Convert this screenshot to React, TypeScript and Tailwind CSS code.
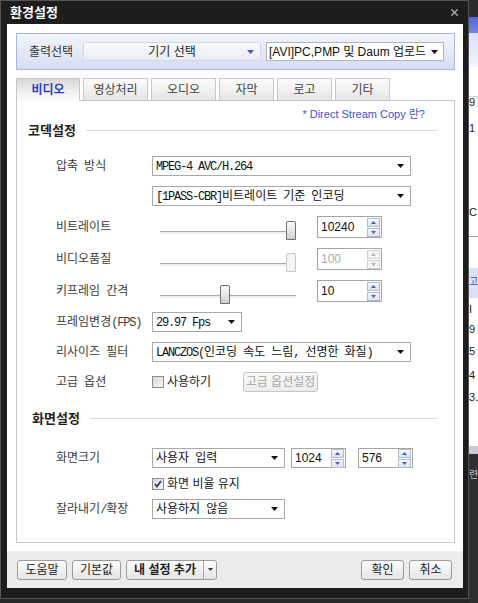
import { X } from 'lucide-react'

const KO = /([\u1100-\u11ff\u3130-\u318f\uac00-\ud7af]+)/

// GulimChe-like text: Korean full width, Latin half width
function Che({ text }: { text: string }) {
  return (
    <span className="whitespace-pre">
      {text.split(KO).map((p, i) =>
        i % 2 ? (
          <span key={i} className="font-['Noto_Sans_CJK_KR',sans-serif] text-[12px]">
            {p}
          </span>
        ) : (
          <span key={i} className="font-['Liberation_Mono',monospace] text-[12px] tracking-[-1.2px]">
            {p}
          </span>
        ),
      )}
    </span>
  )
}

function Arrow({ color = '#111' }: { color?: string }) {
  return (
    <svg width="7" height="4" viewBox="0 0 7 4">
      <path d="M0 0h7L3.5 4z" fill={color} />
    </svg>
  )
}

function Label({ text }: { text: string }) {
  return (
    <div className="w-[96px] shrink-0 text-[#3c3c3c]">
      <Che text={text} />
    </div>
  )
}

function Select({ text, className }: { text: string; className: string }) {
  return (
    <div
      className={`flex h-[20px] shrink-0 items-center justify-between border border-[#a9a9a9] bg-white pl-[3px] pr-[6px] text-[#111] ${className}`}
    >
      <Che text={text} />
      <Arrow />
    </div>
  )
}

function SpinBtn({ up, disabled }: { up?: boolean; disabled?: boolean }) {
  return (
    <div
      className={`flex h-[9px] w-[13px] items-center justify-center border ${
        disabled
          ? 'border-[#d0d0d0] bg-[#f3f3f3]'
          : 'border-[#b3bccd] bg-linear-to-b from-[#f6f8fc] to-[#dde3ef]'
      }`}
    >
      <svg width="5" height="3" viewBox="0 0 5 3">
        <path d={up ? 'M0 3h5L2.5 0z' : 'M0 0h5L2.5 3z'} fill={disabled ? '#b5b5b5' : '#3f5fcf'} />
      </svg>
    </div>
  )
}

function Spin({
  value,
  className,
  disabled,
}: {
  value: string
  className: string
  disabled?: boolean
}) {
  return (
    <div
      className={`flex shrink-0 items-center justify-between border border-[#a5a5a5] bg-white pl-[3px] pr-[1px] ${className}`}
    >
      <span className={`text-[12px] ${disabled ? 'text-[#ababab]' : 'text-[#111]'}`}>{value}</span>
      <div className="flex flex-col gap-[1px]">
        <SpinBtn up disabled={disabled} />
        <SpinBtn disabled={disabled} />
      </div>
    </div>
  )
}

function Slider({ pos, disabled }: { pos: number; disabled?: boolean }) {
  return (
    <div className="relative ml-[8px] h-full w-[136px] shrink-0">
      <div className="mt-[15px] h-[3px] border-t border-[#a9a9a9] bg-[#ededed]" />
      <div
        className={`absolute top-[5px] h-[19px] w-[10px] rounded-t-[2px] border ${
          disabled
            ? 'border-[#c8c8c8] bg-[#f4f4f4]'
            : 'border-[#707070] bg-linear-to-b from-[#fcfcfc] via-[#e8e8e8] to-[#cdcdcd]'
        }`}
        style={{ left: pos }}
      />
    </div>
  )
}

function Check({ checked }: { checked?: boolean }) {
  return (
    <span className="flex h-[12px] w-[12px] shrink-0 items-center justify-center border border-[#8d8d8d] bg-linear-to-br from-[#d8d8d8] to-[#fafafa]">
      {checked && (
        <svg width="8" height="8" viewBox="0 0 8 8">
          <path d="M1 4l2 2.5L7 1" fill="none" stroke="#2f3d66" strokeWidth="1.8" />
        </svg>
      )}
    </span>
  )
}

function Btn({ children, className, bold }: { children: React.ReactNode; className: string; bold?: boolean }) {
  return (
    <div
      className={`flex h-[20px] items-center justify-center rounded-[3px] border border-[#9c9c9c] bg-linear-to-b from-[#fdfdfd] to-[#e4e4e4] text-[12px] text-[#222] ${
        bold ? 'font-bold' : ''
      } ${className}`}
    >
      {children}
    </div>
  )
}

const TABS = [
  { name: '비디오', w: 'w-[64px]' },
  { name: '영상처리', w: 'w-[65px]' },
  { name: '오디오', w: 'w-[65px]' },
  { name: '자막', w: 'w-[55px]' },
  { name: '로고', w: 'w-[55px]' },
  { name: '기타', w: 'w-[55px]' },
]

function Heading({ text, className }: { text: string; className: string }) {
  return (
    <div className={`flex h-[14px] items-center pr-[17px] ${className}`}>
      <span className="text-[13px] font-bold text-[#222]">{text}</span>
      <div className="ml-[10px] h-px flex-1 bg-[#dadada]" />
    </div>
  )
}

function BackWindow() {
  return (
    <div className="flex w-[9px] flex-col overflow-hidden bg-white text-[11px] leading-none text-[#222]">
      <div className="h-[17px] shrink-0 bg-[#2b2b2b]" />
      <div className="h-[16px] shrink-0 bg-linear-to-b from-[#5468d6] to-[#7384e0]" />
      <div className="h-[34px] shrink-0 bg-linear-to-b from-[#dae1f7] to-[#f2f4fc]" />
      <div className="h-[30px] shrink-0 border-b border-[#d4d4d4]" />
      <div className="h-[16px] shrink-0">9</div>
      <div className="h-[90px] shrink-0 pt-[10px]">1</div>
      <div className="h-[34px] shrink-0 border-b border-[#8fa0e0] pt-[4px]">C</div>
      <div className="h-[31px] shrink-0" />
      <div className="h-[30px] shrink-0 bg-[#dbe2f8] pt-[9px] text-[10px] text-[#3d4fd6]">고</div>
      <div className="h-[22px] shrink-0 pt-[6px]">I</div>
      <div className="h-[22px] shrink-0 pt-[4px]">9</div>
      <div className="h-[26px] shrink-0 pt-[4px]">5</div>
      <div className="h-[24px] shrink-0 pt-[2px]">4</div>
      <div className="h-[54px] shrink-0">3.</div>
      <div className="h-[8px] shrink-0 bg-[#c8cad4]" />
      <div className="flex-1 bg-[#303030] pt-[16px] text-[10px] text-[#bdbdbd]">련</div>
    </div>
  )
}

export default function App() {
  return (
    <div className="flex h-[603px] w-[478px] bg-[#262626] font-['Liberation_Sans','Noto_Sans_CJK_KR',sans-serif] text-[12px] leading-none">
      {/* dialog */}
      <div className="flex h-[599px] w-[469px] shrink-0 flex-col border border-[#555] bg-[#1d1d1d]">
        <div className="flex h-[23px] shrink-0 items-center justify-between pl-[9px] pr-[8px]">
          <span className="text-[13px] font-bold text-white">환경설정</span>
          <X size={11} strokeWidth={3.5} className="text-[#9d9d9d]" />
        </div>

        <div className="ml-[6px] mr-[5px] flex h-[564px] shrink-0 flex-col bg-white">
          {/* output select */}
          <div className="mx-[9px] mt-[9px] mr-[8px] flex h-[37px] shrink-0 items-center border border-[#aab6e2] bg-linear-to-b from-[#f2f5fd] to-[#d6ddf4] pl-[12px]">
            <span className="w-[54px] text-[#333]">출력선택</span>
            <div className="relative flex h-[19px] w-[178px] items-center justify-center border border-[#d3d8e6] bg-linear-to-b from-[#fbfbfd] to-[#e8ebf2] text-[#222]">
              <span className="whitespace-pre">기기 선택</span>
              <span className="absolute right-[6px] top-[7px]">
                <Arrow color="#3f55d0" />
              </span>
            </div>
            <div className="ml-[5px] flex h-[19px] w-[178px] items-center justify-between border border-[#b3b3b3] bg-white pl-[2px] pr-[5px] text-[#111]">
              <span className="whitespace-pre">[AVI]PC,PMP 및 Daum 업로드</span>
              <Arrow />
            </div>
          </div>

          {/* tabs */}
          <div className="mx-[9px] mt-[8px] flex h-[22px] shrink-0 items-end gap-[3px]">
            {TABS.map((t, i) =>
              i === 0 ? (
                <div
                  key={t.name}
                  className={`relative z-10 -mb-px flex h-[23px] items-center justify-center border border-b-0 border-[#c6c6c6] bg-linear-to-b from-[#d9d9d9] to-white font-bold text-[#2d40c2] ${t.w}`}
                >
                  {t.name}
                </div>
              ) : (
                <div
                  key={t.name}
                  className={`flex h-[22px] items-center justify-center border border-b-0 border-[#c9c9c9] bg-linear-to-b from-[#fbfbfb] to-[#e6e6e6] text-[#444] ${t.w}`}
                >
                  {t.name}
                </div>
              ),
            )}
          </div>

          {/* tab panel */}
          <div className="ml-[9px] mr-[8px] flex h-[443px] shrink-0 flex-col border border-[#c8c8c8] bg-white">
            <div className="mt-[8px] flex h-[14px] shrink-0 justify-end pr-[29px]">
              <span className="whitespace-pre text-[11px] text-[#3d4fd6]">* Direct Stream Copy 란?</span>
            </div>
            <Heading text="코덱설정" className="pl-[11px]" />

            <div className="flex flex-col pl-[39px]">
              <div className="mt-[19px] flex h-[20px] items-center">
                <Label text="압축 방식" />
                <Select text="MPEG-4 AVC/H.264" className="w-[259px]" />
              </div>
              <div className="mt-[10px] flex h-[20px] items-center">
                <div className="w-[96px] shrink-0" />
                <Select text="[1PASS-CBR]비트레이트 기준 인코딩" className="w-[259px]" />
              </div>

              <div className="mt-[10px] flex h-[22px] items-center">
                <Label text="비트레이트" />
                <Slider pos={126} />
                <Spin value="10240" className="ml-[21px] h-[22px] w-[65px]" />
              </div>
              <div className="mt-[10px] flex h-[22px] items-center">
                <Label text="비디오품질" />
                <Slider pos={126} disabled />
                <Spin value="100" disabled className="ml-[21px] h-[22px] w-[65px]" />
              </div>
              <div className="mt-[10px] flex h-[22px] items-center">
                <Label text="키프레임 간격" />
                <Slider pos={60} />
                <Spin value="10" className="ml-[21px] h-[22px] w-[65px]" />
              </div>

              <div className="mt-[10px] flex h-[20px] items-center">
                <Label text="프레임변경(FPS)" />
                <Select text="29.97 Fps" className="w-[90px]" />
              </div>
              <div className="mt-[10px] flex h-[20px] items-center">
                <Label text="리사이즈 필터" />
                <Select text="LANCZOS(인코딩 속도 느림, 선명한 화질)" className="w-[259px]" />
              </div>
              <div className="mt-[10px] flex h-[20px] items-center">
                <Label text="고급 옵션" />
                <Check />
                <span className="ml-[3px] w-[76px] text-[#222]">사용하기</span>
                <div className="flex h-[20px] w-[75px] items-center justify-center rounded-[3px] border border-[#c4c4c4] bg-linear-to-b from-[#fbfbfb] to-[#ececec] text-[#a6a6a6]">
                  <span className="whitespace-pre">고급 옵션설정</span>
                </div>
              </div>
            </div>

            <Heading text="화면설정" className="mt-[19px] pl-[15px]" />

            <div className="flex flex-col pl-[39px]">
              <div className="mt-[23px] flex h-[20px] items-center">
                <Label text="화면크기" />
                <Select text="사용자 입력" className="w-[133px]" />
                <Spin value="1024" className="ml-[6px] h-[20px] w-[55px]" />
                <Spin value="576" className="ml-[12px] h-[20px] w-[55px]" />
              </div>
              <div className="mt-[6px] flex h-[20px] items-center">
                <div className="w-[96px] shrink-0" />
                <Check checked />
                <span className="ml-[3px] whitespace-pre text-[#222]">화면 비율 유지</span>
              </div>
              <div className="mt-[5px] flex h-[20px] items-center">
                <Label text="잘라내기/확장" />
                <Select text="사용하지 않음" className="w-[133px]" />
              </div>
            </div>
          </div>

          {/* footer */}
          <div className="mt-[8px] flex h-[37px] shrink-0 items-center bg-[#ececec] pl-[10px] pr-[11px]">
            <Btn className="w-[50px]">도움말</Btn>
            <Btn className="ml-[5px] w-[49px]">기본값</Btn>
            <div className="ml-[5px] flex h-[20px] w-[91px] items-stretch rounded-[3px] border border-[#9c9c9c] bg-linear-to-b from-[#fdfdfd] to-[#e4e4e4] text-[#222]">
              <span className="flex flex-1 items-center justify-center whitespace-pre font-bold">내 설정 추가</span>
              <span className="flex w-[13px] items-center justify-center border-l border-[#a8a8a8]">
                <svg width="5" height="3" viewBox="0 0 5 3">
                  <path d="M0 0h5L2.5 3z" fill="#333" />
                </svg>
              </span>
            </div>
            <div className="flex-1" />
            <Btn className="w-[43px]">확인</Btn>
            <Btn className="ml-[5px] w-[43px]">취소</Btn>
          </div>
        </div>
      </div>

      <BackWindow />
    </div>
  )
}
